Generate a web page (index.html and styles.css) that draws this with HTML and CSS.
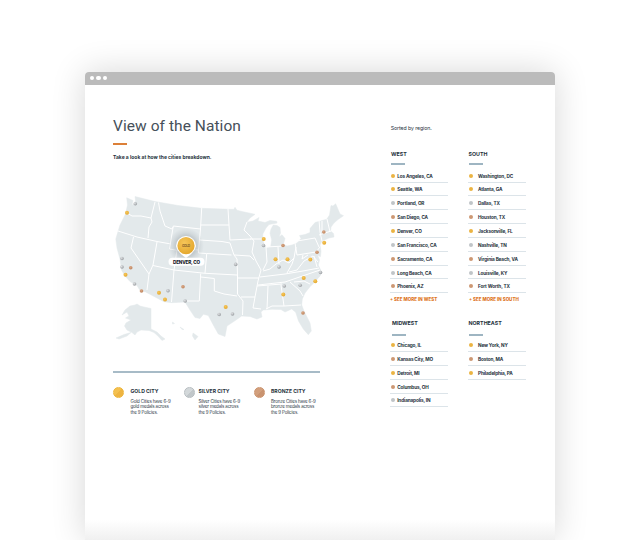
FILE: index.html
```
<!DOCTYPE html>
<html lang="en">
<head>
<meta charset="utf-8">
<title>View of the Nation</title>
<link rel="stylesheet" href="styles.css">
</head>
<body>
<div class="window">
  <div class="bar"><i></i><i></i><i></i></div>
  <main class="page">
    <section class="left">
      <h1>View of the Nation</h1>
      <div class="accent"></div>
      <p class="intro">Take a look at how the cities breakdown.</p>
      <svg class="map" viewBox="105 185 245 165" width="245" height="165">
        <defs>
          <radialGradient id="g" cx=".4" cy=".35" r=".7"><stop offset="0" stop-color="#f6c65a"/><stop offset="1" stop-color="#e3a62b"/></radialGradient>
          <radialGradient id="s" cx=".38" cy=".35" r=".7"><stop offset="0" stop-color="#e0e2e4"/><stop offset="1" stop-color="#94989c"/></radialGradient>
          <radialGradient id="b" cx=".4" cy=".35" r=".7"><stop offset="0" stop-color="#d9a684"/><stop offset="1" stop-color="#bd835c"/></radialGradient>
          <radialGradient id="halo"><stop offset=".45" stop-color="#8b969d" stop-opacity=".5"/><stop offset=".75" stop-color="#8b969d" stop-opacity=".18"/><stop offset="1" stop-color="#8b969d" stop-opacity="0"/></radialGradient>
        </defs>
        <path class="land" d="M126.7 197.7L133 200.5L132 205L134.5 204L135.500 200.500L135 196.500L155 201.500L178 205.500L201.700 208.300L230 209.300L234 209.300L235 207.300L237 210.200L243 211.700L249 213L255 214.300L250 218L246.700 222.300L253 221L259 217.500L258 221L265 222.500L270 220.500L276.700 221.300L277 223L269 224.500L266 228L262.800 234L262.700 239L264.300 245L266.700 247.700L270.700 246.700L271.700 240L270 233.300L271 229L273.300 225L277 225.500L280 227.500L280.500 233L279 237L282 234.700L285 238.500L283.300 244.500L287 246L292 245L297 243L301 238.500L299.500 235.500L305 234.500L310 232.500L310 228.500L315 222.500L326.700 219.300L329.500 215L331 205.500L333 206L335.700 203.800L338.300 210L340 214L343.500 215.700L338 219.500L334 223L331 227L330.500 231L333.500 233.500L334 237L329 238L322 241L320 245L321 251L320.500 256.700L317.500 255L319.500 260L318.300 265L319.700 268L321.700 272L320 276L315 281.700L310 286.700L305 293L302.300 299L301.700 305L304.300 311.700L310 323L311.300 331L308.300 334.700L303.300 329L298.500 321L295.700 312.300L291.700 309L285 312L281 309.500L272 309.300L263.300 310L261 312L262 317L257 319L250 316.500L241.700 316L236 320L227 326L225 336.500L218.300 334L213.300 325L208.300 315.500L203.300 314.300L200 318.500L195 317.500L190 310L185 302L171.700 302.700L164 301.700L145.700 292L140 290.500L137 285.500L130 281.500L125 276L121.500 270L120 259L117 248L115.800 239L120 225L125.500 214L127.500 205Z"/>
        <path class="land" d="M122 315L125 310L130 306L135 305L137 304L140 306L144 307L151 308.500L151 329L157 332L161 336L165 339L162 340.500L158 336L154 332.500L149 330.500L141 330L137 332L135 335L132 332.500L127 330L124.500 326L126 323L131 320L125.500 318L129 316L127 312ZM116 338L124 334.500L131 332.500L127 336L119 339ZM172.500 322L174.500 323.500L172.500 324ZM180 327L184 329.500L182 329.500ZM193 333L198 336.500L195 340L192.500 336Z"/>
        <g class="borders">
          <path d="M127 213L132 216L141 216L151 218M155 202L151 218L152 222L149 227L148 238M118 231L137 237L157 241.500L171 244M158.500 202.500L160 211L163 220L165 226L172 229L173 227M133.500 237L131 248L149 274L147 290M157 242L153 265L149 274M200.500 229L173.300 226L169.500 249L184 251.500M201.700 208L200.500 229L198.500 250L184 249M177 250L174 270L171.500 302M198.500 253L206.700 253.500L231.500 255M153 265.500L174 270L205 273.300L237 275M200.700 273.500L199.300 301L184 301M206.700 254L205 273M201 277L214.300 278.500L214.300 291L224 294L237 296M200.500 225L229 225M200 240L222 241.500L230 243M198.500 250L198.500 253M228 209L229 225L230 240L251 239M230 243L234 255L237 259L237.500 275L237.500 294L243 301L242.500 315M234 255L250 256L254 260M247 222L244 230L250 236L254 241L252 252L256 261L261 270L258 281L255 297L253 308L261 309M250 239L264 239M266 247L267 262L263 270M238 278L259 278M241 297L255 297M258 285L285 282L320 270M260 277L285 274L303 271L319 268M257 286L282 284M268 286L267 309M281 285L284 306L301 305M266 309L272 306L284 306M290 282L300 291L303 296M294 282L304 281L310 284M278 247L279 264M266 247L284 246M263 271L270 269L276 264L283 260L289 263L294 258L296 247M295 243L297 255L316 252L320 247M294 258L292 264L287 273M289 272L297 270L304 261L313 256L318 262M297 241L315 238L319 247M319 220L320 232L322 241M319 235L331 231M322 221L322 232M327 219L330 232M303 255L302 259L308 255M314 256L317 267"/>
        </g>
        <circle cx="186" cy="246" r="18" fill="url(#halo)"/>
        <path d="M176 246A10 10 0 1 1 196 246Q195 252 186 258Q177 252 176 246Z" fill="#fff"/>
        <circle cx="186" cy="245.700" r="8.600" fill="url(#g)"/>
        <text class="pintext" x="186" y="247.200" text-anchor="middle" textLength="8">GOLD</text>
        <rect x="168.500" y="257.700" width="36" height="8" rx="4" fill="#fff"/>
        <text class="denver" x="173" y="263.500" textLength="27">DENVER, CO</text>
        <g fill="url(#g)"><circle cx="127" cy="212.800" r="2"/><circle cx="125.500" cy="274.800" r="2"/><circle cx="159" cy="292.800" r="2"/><circle cx="165" cy="299.600" r="2"/><circle cx="225.700" cy="307" r="2"/><circle cx="263.700" cy="239" r="2"/><circle cx="275.500" cy="259.200" r="2"/><circle cx="287.500" cy="259.200" r="2"/><circle cx="310.300" cy="259.600" r="2"/><circle cx="324.200" cy="242.700" r="2"/><circle cx="303.700" cy="278" r="2"/><circle cx="315.300" cy="281.300" r="2"/><circle cx="283.300" cy="294.500" r="2"/></g>
        <g fill="url(#s)"><circle cx="135.300" cy="203.800" r="1.800"/><circle cx="122" cy="258.500" r="1.800"/><circle cx="122" cy="267" r="1.800"/><circle cx="134.500" cy="284" r="1.800"/><circle cx="168" cy="290.800" r="1.800"/><circle cx="185.200" cy="301" r="1.800"/><circle cx="219.200" cy="314.500" r="1.800"/><circle cx="232.500" cy="314" r="1.800"/><circle cx="235.700" cy="264.400" r="1.800"/><circle cx="263.500" cy="245.500" r="1.800"/><circle cx="279" cy="267" r="1.800"/><circle cx="284.300" cy="286" r="1.800"/><circle cx="300.200" cy="285.300" r="1.800"/><circle cx="320.500" cy="272.500" r="1.800"/></g>
        <g fill="url(#b)"><circle cx="130.700" cy="267.700" r="1.800"/><circle cx="141.500" cy="291" r="1.800"/><circle cx="183" cy="286.800" r="1.800"/><circle cx="283" cy="245.500" r="1.800"/><circle cx="323.800" cy="232" r="1.800"/><circle cx="317" cy="252.300" r="1.800"/><circle cx="303" cy="313" r="1.800"/></g>
      </svg>
      <div class="legend">
        <div class="item i1"><b class="medal gold"></b><div><h3>GOLD CITY</h3><p>Gold Cities have 6-9<br>gold medals across<br>the 9 Policies.</p></div></div>
        <div class="item i2"><b class="medal silver"></b><div><h3>SILVER CITY</h3><p>Silver Cities have 6-9<br>silver medals across<br>the 9 Policies.</p></div></div>
        <div class="item i3"><b class="medal bronze"></b><div><h3>BRONZE CITY</h3><p>Bronze Cities have 6-9<br>bronze medals across<br>the 9 Policies.</p></div></div>
      </div>
    </section>
    <section class="right">
      <p class="sorted">Sorted by region.</p>
      <div class="regions">
        <div class="region">
          <h2>WEST</h2>
          <ul><li class="gold">Los Angeles, CA</li><li class="gold">Seattle, WA</li><li class="silver">Portland, OR</li><li class="bronze">San Diego, CA</li><li class="gold">Denver, CO</li><li class="silver">San Francisco, CA</li><li class="bronze">Sacramento, CA</li><li class="silver">Long Beach, CA</li><li class="bronze">Phoenix, AZ</li></ul>
          <a>+ SEE MORE IN WEST</a>
        </div>
        <div class="region wide">
          <h2>SOUTH</h2>
          <ul><li class="gold">Washington, DC</li><li class="gold">Atlanta, GA</li><li class="silver">Dallas, TX</li><li class="bronze">Houston, TX</li><li class="gold">Jacksonville, FL</li><li class="silver">Nashville, TN</li><li class="bronze">Virginia Beach, VA</li><li class="silver">Louisville, KY</li><li class="bronze">Fort Worth, TX</li></ul>
          <a>+ SEE MORE IN SOUTH</a>
        </div>
        <div class="region mid">
          <h2>MIDWEST</h2>
          <ul><li class="gold">Chicago, IL</li><li class="bronze">Kansas City, MO</li><li class="gold">Detroit, MI</li><li class="bronze">Columbus, OH</li><li class="silver">Indianapolis, IN</li></ul>
        </div>
        <div class="region wide low">
          <h2>NORTHEAST</h2>
          <ul><li class="gold">New York, NY</li><li class="bronze">Boston, MA</li><li class="gold">Philadelphia, PA</li></ul>
        </div>
      </div>
    </section>
  </main>
</div>
</body>
</html>
```
FILE: styles.css
```
* { box-sizing: border-box; margin: 0; padding: 0; }
body {
  height: 540px;
  overflow: hidden;
  padding: 72px 85px 0;
  background: #fff;
  color: #26323c;
  font-family: Inter, "Liberation Sans", sans-serif;
}
.window {
  height: 468px;
  border-radius: 4px 4px 0 0;
  background: linear-gradient(#fff 448px, #f0f0f0 468px);
  box-shadow: 0 0 34px rgba(0, 0, 0, .16);
}
.bar {
  display: flex;
  align-items: center;
  gap: 2.200px;
  height: 12.500px;
  padding-left: 5px;
  border-radius: 4px 4px 0 0;
  background: #bbb;
}
.bar i { width: 4.200px; height: 4.200px; border-radius: 50%; background: #fff; }
.page { display: flex; padding-left: 28px; }
.left { width: 277px; padding-top: 31.500px; }
h1 {
  height: 20px;
  font: 400 15.500px/20px Roboto, sans-serif;
  letter-spacing: .06px;
  color: #46505a;
  white-space: nowrap;
}
.accent { width: 14px; height: 1.500px; margin-top: 7px; background: #dc8038; }
.intro { height: 8px; margin-top: 8px; font-size: 5px; line-height: 8px; font-weight: 700; letter-spacing: 0; }
.map { display: block; margin: 24.500px 0 0 -8px; }
.land { fill: #e3e9eb; stroke: #e3e9eb; stroke-width: .5; stroke-linejoin: round; }
.borders { fill: none; stroke: #fff; stroke-width: 1; stroke-linejoin: round; }
.pintext { font-size: 3.200px; font-weight: 700; fill: #83602a; }
.denver { font-size: 4.600px; font-weight: 800; fill: #17222b; }
.legend {
  display: flex;
  width: 207px;
  margin-top: 20.500px;
  padding-top: 14.500px;
  border-top: 2px solid #a7bbc7;
}
.item { display: flex; flex: none; white-space: nowrap; }
.i1 { width: 71px; }
.i2 { width: 70px; }
.medal { flex: none; width: 10.500px; height: 10.500px; margin-right: 7px; border-radius: 50%; }
.i2 .medal { margin-right: 4px; }
.i3 .medal { margin-right: 6.500px; }
.medal.gold { background: linear-gradient(135deg, #f4c04f 50%, #eeb441 50%); border: 1px solid #eeb944; }
.medal.silver { background: linear-gradient(135deg, #d3d8da 50%, #c1c7ca 50%); border: 1px solid #b9bfc3; }
.medal.bronze { background: linear-gradient(135deg, #d29f7c 50%, #c99370 50%); border: 1px solid #cd9874; }
h3 { font-size: 5.100px; line-height: 8px; font-weight: 700; letter-spacing: 0; }
.item p { margin-top: 3.500px; font-size: 4.400px; line-height: 5.600px; letter-spacing: -.12px; }
.right { width: 137px; padding-top: 39.500px; }
.sorted { margin-left: .7px; font-size: 5.200px; line-height: 8px; letter-spacing: -.07px; }
.regions { display: grid; grid-template-columns: 77.500px 59px; grid-template-rows: 169.500px auto; margin-top: 17.500px; }
h2 { width: 40px; height: 18px; margin-left: 1px; font-size: 5.300px; line-height: 9px; font-weight: 700; letter-spacing: 0; }
h2::after { content: ""; display: block; width: 14px; height: 1.500px; margin-top: 4.500px; background: #9eb5c2; }
.mid h2 { margin-left: 2px; }
.mid h2::after, .low h2::after { margin-top: 6px; }
ul { width: 57.500px; padding-top: 1.200px; list-style: none; }
.wide ul { width: 58.500px; }
li {
  display: flex;
  align-items: center;
  height: 13.850px;
  padding-left: .9px;
  padding-top: 1px;
  border-bottom: 1px solid #dce4e9;
  font-size: 4.700px;
  line-height: 6px;
  font-weight: 700;
  letter-spacing: -.13px;
  white-space: nowrap;
}
li::before { content: ""; flex: none; width: 4px; height: 4px; margin-right: 2.300px; border-radius: 50%; }
.wide li { padding-left: 1.300px; }
.wide li::before { margin-right: 5.200px; }
li.gold::before { background: #ebb443; }
li.silver::before { background: #c0c5c8; }
li.bronze::before { background: #cd9873; }
a { display: block; margin-top: 3px; font-size: 4.500px; line-height: 8px; font-weight: 800; color: #dd7524; white-space: nowrap; }
.wide a { padding-left: 1.500px; }
```
